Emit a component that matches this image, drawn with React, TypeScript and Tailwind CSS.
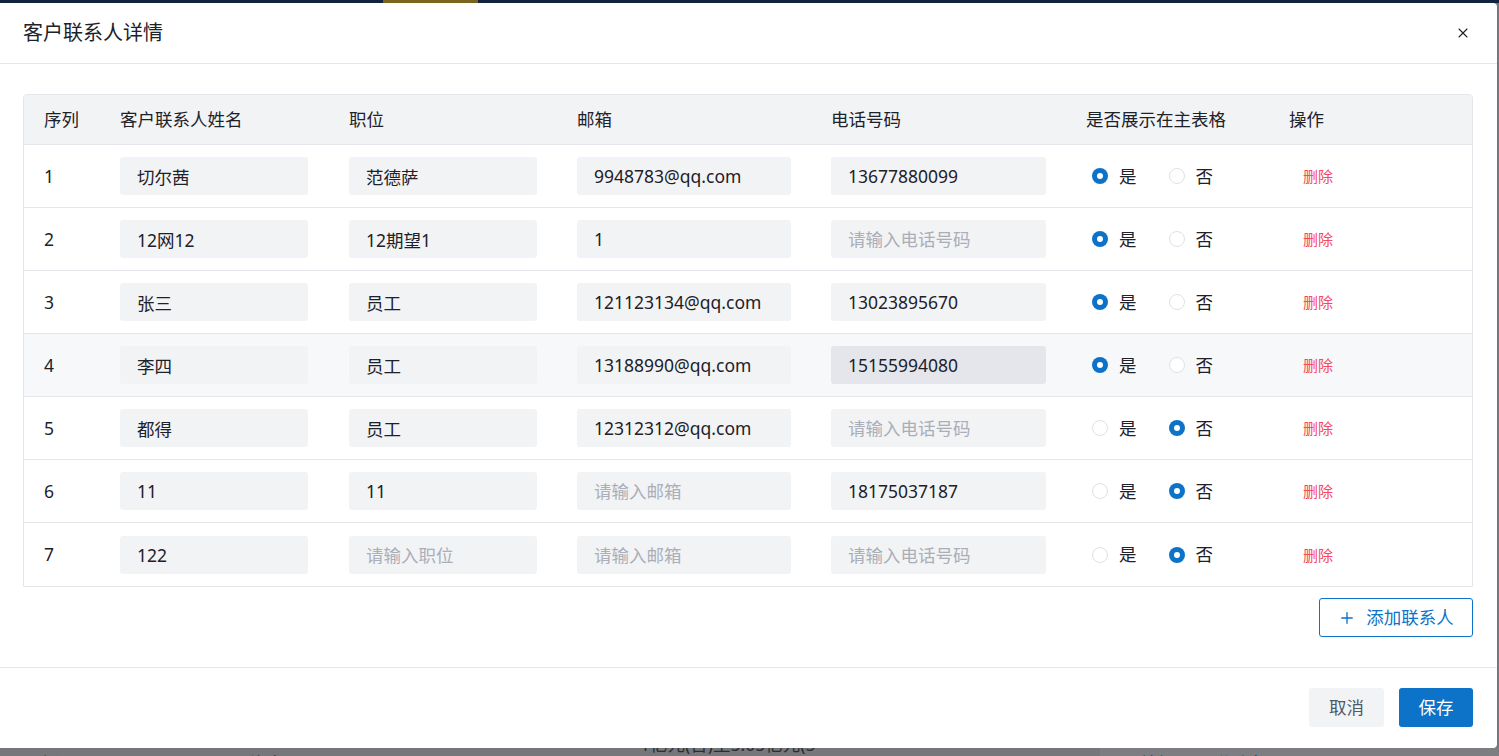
import { Plus, X } from 'lucide-react';

type Contact = {
  name: string;
  title: string;
  email: string;
  phone: string;
  show: boolean;
};

const CONTACTS: Contact[] = [
  { name: '切尔茜', title: '范德萨', email: '9948783@qq.com', phone: '13677880099', show: true },
  { name: '12网12', title: '12期望1', email: '1', phone: '', show: true },
  { name: '张三', title: '员工', email: '121123134@qq.com', phone: '13023895670', show: true },
  { name: '李四', title: '员工', email: '13188990@qq.com', phone: '15155994080', show: true },
  { name: '都得', title: '员工', email: '12312312@qq.com', phone: '', show: false },
  { name: '11', title: '11', email: '', phone: '18175037187', show: false },
  { name: '122', title: '', email: '', phone: '', show: false },
];

const FONT = { fontFamily: '"Noto Sans", "Noto Sans CJK SC", sans-serif' };

function Field({ value, placeholder, w, hover }: { value: string; placeholder: string; w: string; hover?: boolean }) {
  return (
    <input
      readOnly
      defaultValue={value}
      placeholder={placeholder}
      className={`${w} h-[38px] rounded-[3px] pl-[17px] pr-2 text-[17.5px] text-[#1d2129] placeholder:text-[#a9aeb8] outline-none ${hover ? 'bg-[#e5e6eb]' : 'bg-[#f2f3f5]'}`}
      style={FONT}
    />
  );
}

function Radio({ checked, label }: { checked: boolean; label: string }) {
  return (
    <label className="flex items-center gap-[11px] cursor-pointer">
      {checked ? (
        <span className="w-4 h-4 rounded-full bg-[#0c73c8] flex items-center justify-center">
          <span className="w-[6px] h-[6px] rounded-full bg-white" />
        </span>
      ) : (
        <span className="w-4 h-4 rounded-full border-[1.5px] border-[#dfe1e6] bg-white" />
      )}
      <span className="text-[17.5px] text-[#1d2129]">{label}</span>
    </label>
  );
}

export default function App() {
  return (
    <div className="relative h-[756px] w-full overflow-hidden bg-[#75777a] flex flex-col" style={FONT}>
      {/* page behind the overlay */}
      <div className="h-[3px] bg-[#13233f] flex shrink-0">
        <div className="ml-[383px] w-[95px] bg-[#7a6520]" />
      </div>
      <div className="h-[745px] shrink-0" />
      <div className="flex items-start text-[17.5px] leading-[24px] text-[#2b2d31] whitespace-nowrap">
        <span className="ml-[37px] w-[138px] mt-[3px]">上证</span>
        <span className="w-[75px] mt-[3px]">600325</span>
        <span className="w-[145px] mt-[3px]">汽车Automobile</span>
        <span className="ml-[155px] w-[90px] mt-[4px]">20,000</span>
        <span className="-mt-[16px] w-[222px]">1亿元(含)至5.05亿元(5</span>
        <span className="w-[238px] mt-[5px]">驰宏轩</span>
        <div className="flex-1 h-[20px] bg-[#7c7e81] flex text-[#24476b]">
          <span className="ml-[40px] w-[72px] mt-[3px]">编辑</span>
          <span className="mt-[3px]">联系人</span>
        </div>
      </div>

      {/* modal */}
      <div className="absolute top-[3px] left-0 w-[1497px] h-[745px] bg-white rounded-tr-[4px] rounded-br-[4px] flex flex-col">
        <div className="h-[61px] shrink-0 border-b border-[#e5e6eb] flex items-center justify-between pl-[23px] pr-[26px]">
          <h2 className="text-[20px] text-[#1d2129] leading-none -mt-[1px]">客户联系人详情</h2>
          <X size={16} strokeWidth={1.6} className="text-[#1d2129]" />
        </div>

        <div className="flex-1 pt-[30px] pl-[23px] pr-[24px] flex flex-col">
          <div className="border border-[#e5e6eb] rounded-t-[4px]">
            <div className="h-[50px] bg-[#f2f3f5] border-b border-[#e5e6eb] flex items-center text-[17.5px] text-[#1d2129] rounded-t-[4px]">
              <div className="w-[76px] pl-[20px]">序列</div>
              <div className="w-[229px] pl-[20px]">客户联系人姓名</div>
              <div className="w-[228px] pl-[20px]">职位</div>
              <div className="w-[254px] pl-[20px]">邮箱</div>
              <div className="w-[255px] pl-[20px]">电话号码</div>
              <div className="w-[203px] pl-[20px]">是否展示在主表格</div>
              <div className="flex-1 pl-[20px]">操作</div>
            </div>
            {CONTACTS.map((c, i) => {
              const hover = i === 3;
              return (
                <div
                  key={i}
                  className={`h-[63px] flex items-center ${i < CONTACTS.length - 1 ? 'border-b border-[#e5e6eb]' : ''} ${hover ? 'bg-[#f7f8fa]' : 'bg-white'}`}
                >
                  <div className="w-[76px] pl-[20px] text-[17.5px] text-[#1d2129]">{i + 1}</div>
                  <div className="w-[229px] pl-[20px]">
                    <Field value={c.name} placeholder="请输入姓名" w="w-[188px]" />
                  </div>
                  <div className="w-[228px] pl-[20px]">
                    <Field value={c.title} placeholder="请输入职位" w="w-[188px]" />
                  </div>
                  <div className="w-[254px] pl-[20px]">
                    <Field value={c.email} placeholder="请输入邮箱" w="w-[214px]" />
                  </div>
                  <div className="w-[255px] pl-[20px]">
                    <Field value={c.phone} placeholder="请输入电话号码" w="w-[215px]" hover={hover} />
                  </div>
                  <div className="w-[203px] pl-[26px] flex items-center gap-[32px]">
                    <Radio checked={c.show} label="是" />
                    <Radio checked={!c.show} label="否" />
                  </div>
                  <div className="flex-1 pl-[34px]">
                    <button className="text-[15px] text-[#f54a5b]">删除</button>
                  </div>
                </div>
              );
            })}
          </div>

          <div className="flex justify-end mt-[11px]">
            <button className="w-[154px] h-[39px] border border-[#0c73c8] rounded-[3px] flex items-center justify-center gap-[10px] text-[17.5px] text-[#0c73c8]">
              <Plus size={18} strokeWidth={1.8} />
              添加联系人
            </button>
          </div>
        </div>

        <div className="h-[81px] shrink-0 border-t border-[#e5e6eb] flex items-start justify-end gap-[15px] pt-[20px] pr-[24px]">
          <button className="w-[75px] h-[39px] rounded-[3px] bg-[#f2f3f5] text-[17.5px] text-[#4e5969]">取消</button>
          <button className="w-[74px] h-[39px] rounded-[3px] bg-[#0c73c8] text-[17.5px] text-white">保存</button>
        </div>
      </div>
    </div>
  );
}
